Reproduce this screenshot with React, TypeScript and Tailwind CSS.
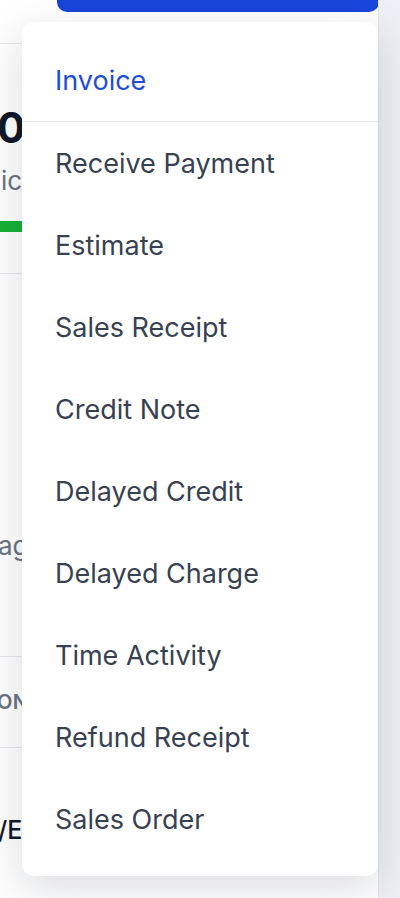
const menuItems = [
  "Receive Payment",
  "Estimate",
  "Sales Receipt",
  "Credit Note",
  "Delayed Credit",
  "Delayed Charge",
  "Time Activity",
  "Refund Receipt",
  "Sales Order",
];

export default function App() {
  return (
    <div
      className="relative w-[400px] h-[898px] overflow-hidden bg-[#eef0f3]"
      style={{ fontFamily: "Inter, 'Noto Sans', sans-serif" }}
    >
      {/* Page behind the menu */}
      <div className="w-[379px] h-full bg-white border-r border-[#e3e5e9] overflow-hidden">
        <div className="h-[44px] border-b border-[#e5e7eb]">
          <div className="ml-[57px] w-[322px] h-[12px] rounded-b-[10px] bg-[#1a45db]" />
        </div>

        <div className="h-[230px] border-b border-[#e5e7eb] pt-[62px]">
          <div className="ml-[-3px] text-[42px] leading-[44px] font-bold text-[#111827]">0</div>
          <div className="mt-[16px] ml-[1px] text-[26px] leading-[30px] text-[#6b7280]">ic</div>
          <div className="mt-[25px] h-[11px] w-[300px] bg-[#17b137]" />
        </div>

        <div className="h-[383px] border-b border-[#e5e7eb] pt-[257px]">
          <div className="ml-[-2px] text-[26px] leading-[30px] text-[#6b7280]">ag</div>
        </div>

        <div className="h-[91px] border-b border-[#e5e7eb] flex items-center">
          <div className="ml-[-3px] text-[20px] font-semibold tracking-wide text-[#6b7280]">ON</div>
        </div>

        <div className="h-[164px] pt-[64px]">
          <div className="ml-[-2px] text-[25px] leading-[36px] font-medium text-[#111827]">/E</div>
        </div>
      </div>

      {/* Dropdown menu */}
      <div className="absolute left-[22px] top-[22px] w-[356px] rounded-xl bg-white pt-[19px] pb-[16px] shadow-[0_12px_44px_rgba(15,23,42,0.15)]">
        <div className="h-[80px] flex items-center pl-[33px] text-[27px] text-[#1d4ed8]">
          Invoice
        </div>
        <div className="h-px bg-[#e5e7eb]" />
        {menuItems.map((item) => (
          <div
            key={item}
            className="h-[82px] pt-[2px] flex items-center pl-[33px] text-[27px] text-[#374151]"
          >
            {item}
          </div>
        ))}
      </div>
    </div>
  );
}
